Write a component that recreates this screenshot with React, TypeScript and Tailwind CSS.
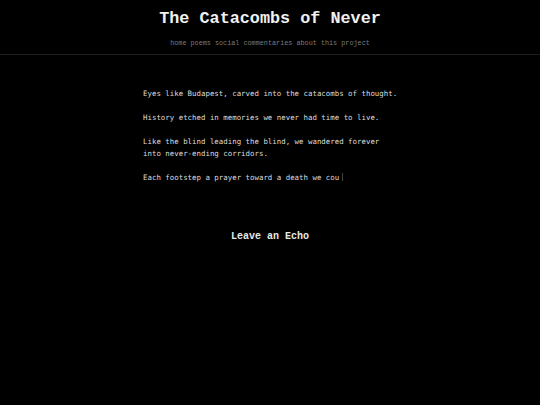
const lines = [
  'Eyes like Budapest, carved into the catacombs of thought.',
  'History etched in memories we never had time to live.',
  'Like the blind leading the blind, we wandered forever into never-ending corridors.',
];

export default function App() {
  return (
    <div className="min-h-[405px] w-full bg-black text-[#e5e5e5]">
      <header className="flex flex-col items-center border-b border-[#1c1c1c] pb-[7px] pt-[11px]">
        <h1 className="font-['Liberation_Mono','Courier_New',monospace] text-[16.8px] font-bold leading-[16px] text-[#f0f0f0]">
          The Catacombs of Never
        </h1>
        <nav className="mt-[12px] flex gap-[4px] font-['Liberation_Mono','Courier_New',monospace] text-[6.8px] leading-[8px] text-[#7a7a7a]">
          <span>home</span>
          <span>poems</span>
          <span>social commentaries</span>
          <span>about this project</span>
        </nav>
      </header>

      <main className="mx-auto mt-[33px] w-[256px] translate-x-[1px] font-['DejaVu_Sans_Mono',monospace] text-[7.42px] leading-[12px] text-[#dcdcdc]">
        {lines.map((l) => (
          <p key={l} className="mb-[12px]">{l}</p>
        ))}
        <p>
          Each footstep a prayer toward a death we cou
          <span className="ml-[3px] inline-block h-[8px] w-px translate-y-[1px] bg-[#444]" />
        </p>
      </main>

      <h2 className="mt-[47px] text-center font-['Liberation_Mono','Courier_New',monospace] text-[10px] font-bold leading-[12px] text-[#e8e8e8]">
        Leave an Echo
      </h2>
    </div>
  );
}
